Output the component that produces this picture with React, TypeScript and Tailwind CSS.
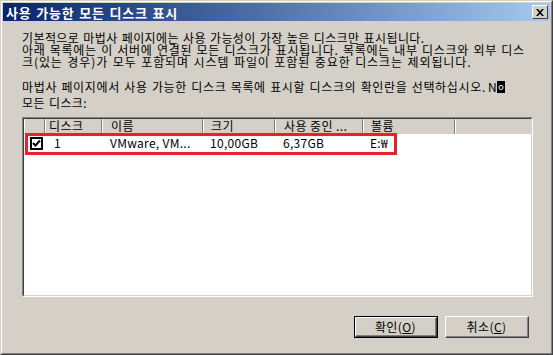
import React from 'react';

const columns = [
  { label: '', w: 'w-[21px]', pl: 'pl-0' },
  { label: '디스크', w: 'w-[57px]', pl: 'pl-[3px]' },
  { label: '이름', w: 'w-[101px]', pl: 'pl-[8px]' },
  { label: '크기', w: 'w-[72px]', pl: 'pl-[7px]' },
  { label: '사용 중인 ...', w: 'w-[88px]', pl: 'pl-[8px]' },
  { label: '볼륨', w: 'w-[92px]', pl: 'pl-[7px]' },
];

const row = ['1', 'VMware, VM...', '10,00GB', '6,37GB', 'E:₩'];

const Button: React.FC<{ label: string; hot: string; isDefault?: boolean }> = ({ label, hot, isDefault }) => (
  <div className={isDefault ? 'border border-black' : ''}>
    <div className={`border-t border-l border-white border-r border-b border-r-[#404040] border-b-[#404040] ${isDefault ? 'w-[82px] h-[20px]' : 'w-[84px] h-[22px]'}`}>
      <div className="h-full border-r border-b border-[#808080] flex items-center justify-center text-[12px] leading-none tracking-[0.4px]">
        {label}(<span className="underline">{hot}</span>)
      </div>
    </div>
  </div>
);

export default function App() {
  return (
    <div className="w-[553px] h-[355px] bg-[#d4d0c8] border border-[#d4d0c8] border-r-[#404040] border-b-[#404040] font-['Noto_Sans_CJK_KR',sans-serif] text-black">
      <div className="h-full border border-white border-r-[#808080] border-b-[#808080] p-px flex flex-col">
        {/* title bar */}
        <div className="h-[18px] shrink-0 flex items-center justify-between bg-gradient-to-r from-[#0a246a] to-[#a6caf0] pl-[3px] pr-[2px]">
          <span className="text-white font-bold text-[13px] leading-none whitespace-nowrap tracking-[0.8px] [word-spacing:1px]">사용 가능한 모든 디스크 표시</span>
          <div className="w-[16px] h-[14px] bg-[#d4d0c8] border border-white border-r-[#404040] border-b-[#404040] flex items-center justify-center">
            <svg width="8" height="7" viewBox="0 0 8 7">
              <path d="M0 0h2l2 2.2L6 0h2L5 3.5 8 7H6L4 4.8 2 7H0l3-3.5z" fill="#000" />
            </svg>
          </div>
        </div>

        <div className="flex-1 flex flex-col pl-[19px] pt-[11px] [word-spacing:1px]">
          <div className="text-[12px] leading-[12px] whitespace-nowrap">
            <div className="tracking-[0.4px]">기본적으로 마법사 페이지에는 사용 가능성이 가장 높은 디스크만 표시됩니다.</div>
            <div className="tracking-[0.7px]">아래 목록에는 이 서버에 연결된 모든 디스크가 표시됩니다. 목록에는 내부 디스크와 외부 디스</div>
            <div className="tracking-[0.9px]">크(있는 경우)가 모두 포함되며 시스템 파일이 포함된 중요한 디스크는 제외됩니다.</div>
          </div>
          <div className="mt-[13px] text-[12px] leading-[12px] whitespace-nowrap flex items-center tracking-[0.65px]">
            마법사 페이지에서 사용 가능한 디스크 목록에 표시할 디스크의 확인란을 선택하십시오.
            <span className="ml-[2px]">N</span>
            <span className="bg-black text-white text-[9px] leading-[12px] px-px">o</span>
          </div>
          <div className="mt-[4px] text-[12px] leading-[12px] tracking-[0.4px]">모든 디스크:</div>

          {/* list view */}
          <div className="relative mt-[8px] w-[511px] h-[180px] border border-[#808080] border-r-white border-b-white [word-spacing:0px]">
            <div className="h-full border border-[#404040] border-r-[#d4d0c8] border-b-[#d4d0c8] bg-white flex flex-col">
              <div className="flex h-[15px] shrink-0 bg-[#d4d0c8]">
                {columns.map((c, i) => (
                  <div
                    key={i}
                    className={`${c.w} ${c.pl} h-full shrink-0 border-l border-white border-r border-r-[#808080] text-[12px] leading-[14px] whitespace-nowrap tracking-[0.4px]`}
                  >
                    {c.label}
                  </div>
                ))}
                <div className="flex-1 h-full border-l border-white" />
              </div>
              <div className="flex h-[17px] items-center text-[12px] leading-none">
                <div className="w-[21px] shrink-0 flex justify-center pl-[3px] pt-[2px]">
                  <div className="w-[13px] h-[13px] border-2 border-black bg-white flex items-center justify-center">
                    <svg width="9" height="9" viewBox="0 0 9 9">
                      <path d="M1 4l2.5 2.5L8 1.5" stroke="#000" strokeWidth="2" fill="none" />
                    </svg>
                  </div>
                </div>
                {row.map((t, i) => (
                  <div key={i} className={`${columns[i + 1].w} shrink-0 whitespace-nowrap tracking-[0.3px] ${i === 0 ? 'pl-[9px]' : columns[i + 1].pl}`}>
                    {t}
                  </div>
                ))}
              </div>
            </div>
            {/* annotation */}
            <div className="absolute left-[2px] top-[15px] w-[372px] h-[22px] border-[3px] border-[#e8202a]" />
          </div>

          <div className="mt-[19px] flex justify-end gap-[7px] pr-[21px]">
            <Button label="확인" hot="O" isDefault />
            <Button label="취소" hot="C" />
          </div>
        </div>
      </div>
    </div>
  );
}
